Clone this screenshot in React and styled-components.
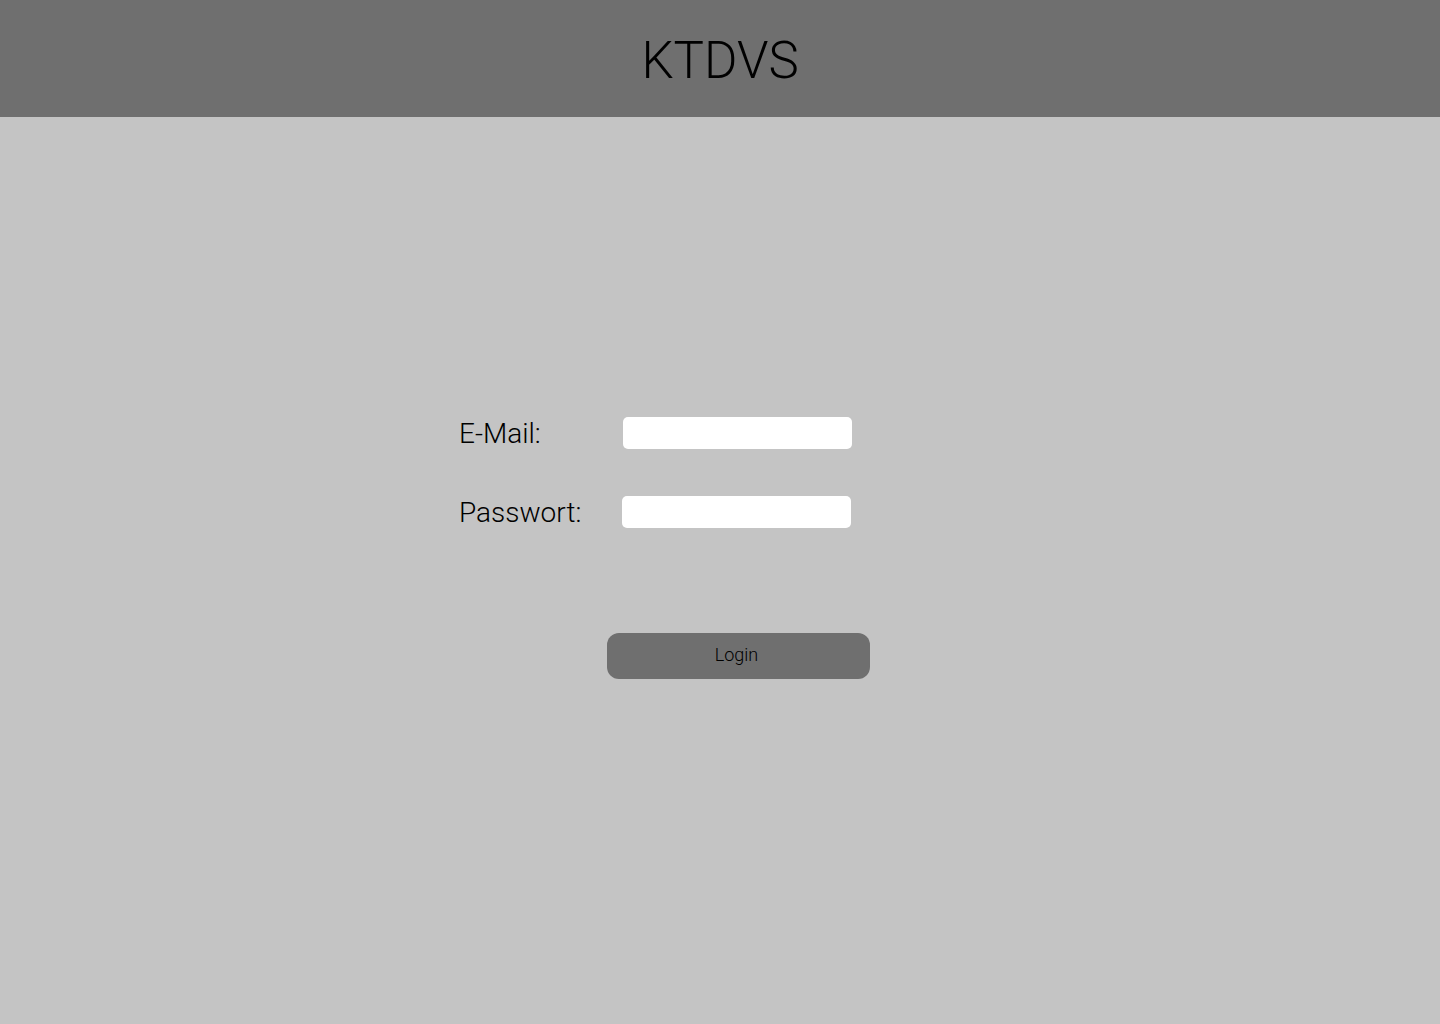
import styled, { createGlobalStyle } from "styled-components";

const GlobalStyle = createGlobalStyle`
  html, body {
    margin: 0;
    padding: 0;
    background: #c4c4c4;
    font-family: Roboto, "Liberation Sans", sans-serif;
  }
`;

export default function App() {
  return (
    <>
      <GlobalStyle />
      <Page>
        <Header>
          <Title>KTDVS</Title>
        </Header>
        <Main>
          <LoginForm onSubmit={(e) => e.preventDefault()}>
            <Fields>
              <Label htmlFor="email">E-Mail:</Label>
              <Input id="email" type="email" />
              <Label htmlFor="password">Passwort:</Label>
              <Input id="password" type="password" $shift={-1} />
            </Fields>
            <LoginButton type="submit">Login</LoginButton>
          </LoginForm>
        </Main>
      </Page>
    </>
  );
}

const Page = styled.div`
  min-height: 1024px;
  display: flex;
  flex-direction: column;
  background: #c4c4c4;
`;

const Header = styled.header`
  height: 117px;
  background: #6f6f6f;
  display: flex;
  align-items: center;
  justify-content: center;
`;

const Title = styled.h1`
  margin: 0;
  padding-top: 3px;
  font-size: 51px;
  font-weight: 300;
  color: #000;
`;

const Main = styled.main`
  flex: 1;
  padding-top: 300px;
`;

const LoginForm = styled.form`
  width: 411px;
  margin-left: calc(50% - 261px);
  display: flex;
  flex-direction: column;
`;

const Fields = styled.div`
  display: grid;
  grid-template-columns: 164px 229px;
  row-gap: 47px;
  align-items: center;
`;

const Label = styled.label`
  font-size: 28px;
  font-weight: 300;
  color: #000;
  line-height: 32px;
  padding-top: 1px;
  margin-bottom: -1px;
`;

const Input = styled.input`
  box-sizing: border-box;
  width: 229px;
  height: 32px;
  border: none;
  border-radius: 5px;
  background: #fff;
  outline: none;
  padding: 0 8px;
  font-size: 16px;
  margin-left: ${(p) => p.$shift || 0}px;
`;

const LoginButton = styled.button`
  margin-top: 105px;
  margin-left: 148px;
  width: 263px;
  height: 46px;
  padding: 0 4px 3px 0;
  border: none;
  border-radius: 12px;
  background: #6f6f6f;
  color: #000;
  font-family: Roboto, "Liberation Sans", sans-serif;
  font-size: 18px;
  font-weight: 300;
  cursor: pointer;
`;
